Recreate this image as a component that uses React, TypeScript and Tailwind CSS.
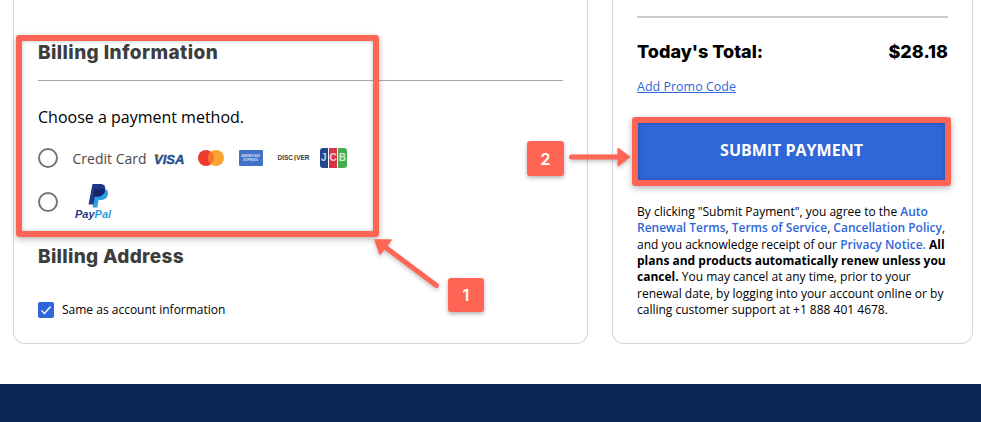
import React from "react";

const heading = { fontFamily: "Inter, 'Liberation Sans', sans-serif" };

function Radio() {
  return <span className="block h-[20px] w-[20px] shrink-0 rounded-full border-2 border-[#757575] bg-white" />;
}

function Visa() {
  return (
    <svg width="32" height="14" viewBox="0 0 32 14" className="block">
      <path d="M1 3 L6 3 L8 8 C6.5 5.5 4 4 1 3Z" fill="#f0a52b" />
      <text x="2" y="12.5" fontFamily="Liberation Sans, sans-serif" fontSize="13" fontWeight="700" fontStyle="italic" fill="#1f4e91" stroke="#1f4e91" strokeWidth="0.4">VISA</text>
    </svg>
  );
}

function Mastercard() {
  return (
    <svg width="26" height="16" viewBox="0 0 26 16" className="block">
      <circle cx="8" cy="8" r="8" fill="#ee3b2f" />
      <circle cx="18" cy="8" r="8" fill="#fba332" />
      <path d="M13 1.8 a8 8 0 0 1 0 12.4 a8 8 0 0 1 0 -12.4Z" fill="#f5702b" />
    </svg>
  );
}

function Amex() {
  return (
    <span className="flex h-[16px] w-[24px] flex-col items-center justify-center rounded-[1px] bg-[#4373c9] text-[3.5px] font-bold leading-[4px] text-[#cfdcf3]">
      <span>AMERICAN</span>
      <span>EXPRESS</span>
    </span>
  );
}

function Discover() {
  return (
    <span className="flex w-[32px] items-center justify-center text-[6.5px] font-bold leading-none text-[#3a3a3a]" style={{ fontFamily: "Liberation Sans, sans-serif" }}>
      DISC<span className="mx-[0.5px] h-[6px] w-[6px] rounded-full bg-[#ee8a2b]" />VER
    </span>
  );
}

function Jcb() {
  return (
    <span className="flex h-[20px] w-[27px] gap-[1px] text-[10px] font-bold leading-none text-white/75" style={{ fontFamily: "Liberation Sans, sans-serif" }}>
      <span className="flex flex-1 items-center justify-center rounded-l-[3px] bg-[#23488f]">J</span>
      <span className="flex flex-1 items-center justify-center bg-[#d9324a]">C</span>
      <span className="flex flex-1 items-center justify-center rounded-r-[3px] bg-[#43ad4e]">B</span>
    </span>
  );
}

function PayPal() {
  return (
    <div className="flex flex-col items-center">
      <svg width="20" height="24" viewBox="0 0 20 24" className="ml-[9px] block">
        <path d="M8 5 H15.5 C20.5 5 20.5 9 19.5 11.5 C18.5 15 15.5 16 12.5 16 H10.5 L9.3 23.5 H4.5Z" fill="#2a9fe0" />
        <path d="M4.5 0 H12 C16.5 0 18 2.5 17 6.5 C16 10.5 13 12.5 9 12.5 H7 L5.5 20.5 H0.5Z" fill="#1d3a8a" />
        <path d="M6.5 5 H15.5 C16.5 5 17 5.3 17 6.5 C16 10.5 13 12.5 9 12.5 H7 L5.3 12.5Z" fill="#16256b" />
      </svg>
      <span className="mt-[1px] text-[11px] font-bold italic leading-[11px]" style={{ fontFamily: "'Liberation Sans', sans-serif" }}>
        <span className="text-[#1d3a8a]">Pay</span>
        <span className="text-[#2a9fe0]">Pal</span>
      </span>
    </div>
  );
}

function Annotations() {
  return (
    <>
      <div className="absolute left-[16px] top-[35px] h-[202px] w-[363px] rounded-[3px] border-[6px] border-[#ff6554] shadow-[0_2px_6px_rgba(0,0,0,0.3),inset_0_0_4px_rgba(0,0,0,0.25)]" />
      <div className="absolute left-[632px] top-[117px] h-[69px] w-[319px] rounded-[3px] border-[6px] border-[#ff6554] shadow-[0_2px_6px_rgba(0,0,0,0.3),inset_0_0_4px_rgba(0,0,0,0.25)]" />
      <div className="absolute left-[448px] top-[278px] flex h-[34px] w-[36px] items-center justify-center rounded-[3px] bg-[#ff6554] text-[16px] font-semibold text-white shadow-[0_2px_4px_rgba(0,0,0,0.3)]" style={{ fontFamily: "Inter, sans-serif" }}>1</div>
      <div className="absolute left-[527px] top-[141px] flex h-[35px] w-[37px] items-center justify-center rounded-[3px] bg-[#ff6554] text-[16px] font-semibold text-white shadow-[0_2px_4px_rgba(0,0,0,0.3)]" style={{ fontFamily: "Inter, sans-serif" }}>2</div>
      <svg className="absolute left-[365px] top-[230px] drop-shadow-[0_2px_2px_rgba(0,0,0,0.25)]" width="85" height="65" viewBox="365 230 85 65">
        <path d="M436.5 285.5 L385 247" stroke="#ff6554" strokeWidth="5" strokeLinecap="round" />
        <path d="M375 240 L391 240 L380 254Z" fill="#ff6554" stroke="#ff6554" strokeLinejoin="round" strokeWidth="1.5" />
      </svg>
      <svg className="absolute left-[565px] top-[140px] drop-shadow-[0_2px_2px_rgba(0,0,0,0.25)]" width="70" height="34" viewBox="565 140 70 34">
        <path d="M571.5 157 H620" stroke="#ff6554" strokeWidth="5" strokeLinecap="round" />
        <path d="M618 148 L630 157 L618 166Z" fill="#ff6554" stroke="#ff6554" strokeLinejoin="round" />
      </svg>
    </>
  );
}

export default function App() {
  return (
    <div className="relative flex h-[422px] w-[981px] flex-col overflow-hidden bg-white text-black" style={{ fontFamily: "'Open Sans', sans-serif" }}>
      <div className="flex h-[344px] gap-[24px] pl-[13px] pr-[8px]">
        <section className="w-[575px] rounded-b-[12px] border-x border-b border-[#d3d5e2] px-[24px] pt-[41px]">
          <h2 className="text-[19px] font-extrabold leading-[24px] tracking-[0.4px] text-[#3d3d3d]" style={heading}>Billing Information</h2>
          <div className="mt-[15px] h-px bg-[#a8a8a8]" />
          <p className="mt-[25px] text-[16px] leading-[22px]">Choose a payment method.</p>
          <div className="mt-[20px] flex h-[20px] items-center">
            <Radio />
            <span className="ml-[14.5px] text-[14px] text-[#4a4a4a]">Credit Card</span>
            <span className="ml-[5px]"><Visa /></span>
            <span className="ml-[14px]"><Mastercard /></span>
            <span className="ml-[15px]"><Amex /></span>
            <span className="ml-[15px]"><Discover /></span>
            <span className="ml-[10px]"><Jcb /></span>
          </div>
          <div className="mt-[16px] flex h-[35px] items-center">
            <Radio />
            <span className="ml-[17px]"><PayPal /></span>
          </div>
          <h2 className="mt-[26px] text-[19px] font-extrabold leading-[24px] tracking-[0.3px] text-[#3d3d3d]" style={heading}>Billing Address</h2>
          <label className="mt-[33px] flex items-center gap-[8px]">
            <span className="flex h-[16px] w-[16px] items-center justify-center rounded-[2px] bg-[#2f66d8]">
              <svg width="12" height="12" viewBox="0 0 12 12" fill="none"><path d="M1.5 6.5 L4.5 9.5 L10.5 2.5" stroke="#fff" strokeWidth="1.3" /></svg>
            </span>
            <span className="text-[12px] leading-[16px]">Same as account information</span>
          </label>
        </section>
        <aside className="w-[361px] rounded-b-[12px] border-x border-b border-[#d3d5e2] px-[24px] pt-[16px]">
          <div className="h-[2px] bg-[#cccccc]" />
          <div className="mt-[22px] flex items-center justify-between text-[18px] font-extrabold leading-[24px]" style={heading}>
            <span>Today's Total:</span>
            <span>$28.18</span>
          </div>
          <a className="mt-[14px] block text-[12.5px] leading-[18px] text-[#2f66d8] underline">Add Promo Code</a>
          <button className="mx-[1px] mt-[27px] flex h-[57px] w-[307px] items-center justify-center bg-[#2f66d8] pb-[3px] text-[16px] font-bold text-white">SUBMIT PAYMENT</button>
          <p className="mt-[24px] text-[12px] leading-[16.33px]">
            By clicking "Submit Payment", you agree to the <a className="font-semibold text-[#2f66d8]">Auto Renewal Terms</a>, <a className="font-semibold text-[#2f66d8]">Terms of Service</a>, <a className="font-semibold text-[#2f66d8]">Cancellation Policy</a>, and you acknowledge receipt of our <a className="font-semibold text-[#2f66d8]">Privacy Notice.</a> <b>All plans and products automatically renew unless you cancel.</b> You may cancel at any time, prior to your renewal date, by logging into your account online or by calling customer support at +1 888 401 4678.
          </p>
        </aside>
      </div>
      <footer className="mt-[40px] flex-1 bg-[#0a2754]" />
      <Annotations />
    </div>
  );
}
